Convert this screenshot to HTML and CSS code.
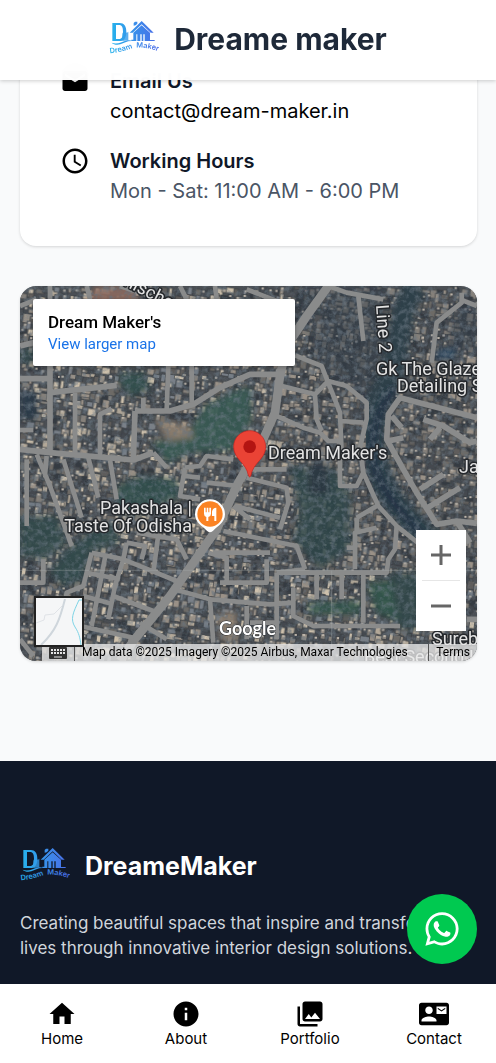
FILE: index.html
```html
<!DOCTYPE html>
<html lang="en">
<head>
    <meta charset="UTF-8">
    <meta name="viewport" content="width=device-width, initial-scale=1.0">
    <title>Dreame maker</title>
    <link rel="stylesheet" href="styles.css">
</head>
<body>

<!-- Shared logo -->
<svg class="sprite" aria-hidden="true">
    <defs>
        <linearGradient id="logoFill" gradientUnits="userSpaceOnUse" x1="30" y1="0" x2="170" y2="0">
            <stop offset="0" stop-color="#25b5ec"/>
            <stop offset="1" stop-color="#4a6fe8"/>
        </linearGradient>
    </defs>
    <symbol id="logo" viewBox="30 15 150 150">
        <g fill="url(#logoFill)">
            <path fill-rule="evenodd" d="M40 42h22c13 0 20 9 20 26 0 18-7 28-20 28H40zM51 48v42h9c9 0 12-8 12-22 0-13-3-20-12-20z"/>
            <path d="M70 96V74l7-14 6 12 5-4v26z" opacity=".8"/>
            <path d="M104 50V42l4-4h7v6l-5 5zM92 71l36-35 36 35h-9l-27-25-27 25z"/>
            <path d="M103 71l25-22 25 22v22h14v3h-30V76h-4v20h-5V76h-4v20h-9V76h-3v20H97v-4h6z"/>
            <path d="M38 101c16 6 30-2 42-6 8-2 14-2 20 1-16-1-24 6-36 10-10 3-20 1-26-5z"/>
        </g>
        <path id="logoArc" d="M33 133Q72 129 100 117Q138 112 178 127" fill="none"/>
        <text class="logo-text" fill="url(#logoFill)"><textPath href="#logoArc">Dream&#160; Maker</textPath></text>
    </symbol>
</svg>

<header class="header">
    <svg class="logo" role="img" aria-label="Dream Maker"><use href="#logo"/></svg>
    <h1 class="brand">Dreame maker</h1>
</header>

<main class="content">
    <section class="card">
        <div class="info-row">
            <svg class="icon" viewBox="0 0 24 24"><path d="M20 4H4c-1.100 0-2 .9-2 2v12c0 1.100.9 2 2 2h16c1.100 0 2-.9 2-2V6c0-1.100-.9-2-2-2zm0 4l-8 5-8-5V6l8 5 8-5v2z"/></svg>
            <div>
                <h2 class="info-title">Email Us</h2>
                <a class="info-link" href="mailto:contact@dream-maker.in">contact@dream-maker.in</a>
            </div>
        </div>
        <div class="info-row">
            <svg class="icon" viewBox="0 0 24 24"><path d="M12 2C6.500 2 2 6.500 2 12s4.500 10 10 10 10-4.500 10-10S17.500 2 12 2zm0 18c-4.400 0-8-3.600-8-8s3.600-8 8-8 8 3.600 8 8-3.600 8-8 8zM12.500 7H11v6l5.200 3.200.8-1.300-4.500-2.700z"/></svg>
            <div>
                <h2 class="info-title">Working Hours</h2>
                <p class="info-text">Mon - Sat: 11:00 AM - 6:00 PM</p>
            </div>
        </div>
    </section>

    <section class="map" aria-label="Map">
        <svg class="map-canvas" viewBox="0 0 457 375" preserveAspectRatio="xMidYMid slice">
            <defs>
                <filter id="soft" x="-10%" y="-10%" width="120%" height="120%"><feGaussianBlur stdDeviation="9"/></filter>
                <filter id="edge"><feGaussianBlur stdDeviation="1.200"/></filter>
                <filter id="grain" x="0" y="0" width="100%" height="100%">
                    <feTurbulence type="fractalNoise" baseFrequency=".06" numOctaves="4" seed="5"/>
                    <feColorMatrix values="0 0 0 0 .14  0 0 0 0 .18  0 0 0 0 .22  3 0 0 0 -1.300"/>
                </filter>
            </defs>
            <g transform="scale(.33333)">
                <rect width="1371" height="1125" fill="#4b4f54"/>
                <g id="blocks" filter="url(#edge)"></g>

                <!-- Tree cover, fields and ponds -->
                <g filter="url(#soft)" opacity=".92">
                    <path fill="#303d49" opacity=".6" d="M930 0h160l30 330-70 120-30-140-110-50-40-90zM1290 60h81v140l-90 10zM1060 470l130 240-100-60-70-90zM830 0h90l-60 150z"/>
                    <path fill="#375a53" d="M690 300l5 100-50 90-140 10-60 30-50-60 100-20 60-90 80-40z"/>
                    <path fill="#33504d" d="M290 600l70-30 110 10 10 55-130 50-60-10zM300 260l70 0 20 50-60 20-30-40z"/>
                    <path fill="#30494b" d="M130 800l90-70 60-20 20 60-90 30-20 80-60 20-40-40zM0 190h45v40H0zM0 690h110l30 80-60 50-80-10z"/>
                    <path fill="#2b3a48" d="M0 315h45l10 85H0z"/>
                    <path fill="#30494b" opacity=".85" d="M810 540l130 10 50 70v170l-90 60-80-90 20-80z"/>
                    <path fill="#2a3843" d="M865 535h60v90h-60z"/>
                    <path fill="#33554c" d="M1040 890l110-10 40 60v90l-120-50zM860 950l160-5v40H870z"/>
                    <path fill="#30474a" d="M1110 860h110l-30 170-50 0z"/>
                    <path fill="#8b6b5e" d="M225 0h110l30 60H190z"/>
                    <path fill="#8d7f70" d="M405 400l100 15 15 40-80 10zM590 985l60-10v90h-50z"/>
                    <path fill="#2f4a62" d="M1250 190l55-5v35h-60z"/>
                </g>

                <!-- Canal -->
                <path d="M1190 0C1120 90 1150 190 1105 280S1050 400 1065 500 1120 660 1240 770" fill="none" stroke="#2e414a" stroke-width="68" filter="url(#soft)"/>
                <path d="M1120 310C1070 380 1050 450 1060 520S1120 660 1210 750" fill="none" stroke="#213144" stroke-width="20" filter="url(#soft)"/>
                <rect width="1371" height="1125" filter="url(#grain)" opacity=".6"/>

                <!-- Streets -->
                <g class="roads" filter="url(#edge)">
                    <path class="road-main" d="M925 0L860 90L800 180L780 270L765 380L725 470L655 590L590 730L450 930L340 1065L300 1125"/>
                    <path class="road-wide" d="M0 490L90 500L340 522L400 500M0 278H90M90 240V500M90 320L290 298M345 375L340 522M345 375H450L520 355L600 305L690 265H775M0 180L60 165"/>
                    <path d="M165 320V500M240 510V385L275 368M445 240L440 370M515 240V350M370 335V372M400 500L440 545M0 432H40M20 520V720M50 505L90 600L155 780M80 510L75 570M130 520L185 695M205 515L235 635M270 522L290 640"/>
                    <path d="M200 0L210 40M300 0L420 40M585 0L590 40M680 10L770 45M90 0V40M480 0L500 40M0 60L50 40"/>
                    <path d="M825 208L905 240L960 380L965 500M785 300L885 325L925 285L980 300L1040 350V400L1020 485L1030 560L1075 660L1130 720L1200 775M885 325L890 400L905 435M770 390L850 425L900 440L925 465L965 465M965 405L1030 410"/>
                    <path d="M1325 20V50L1250 110L1235 230M925 0L980 20L1090 40M1015 30L1030 165M1371 60L1320 40"/>
                    <path class="road-wide" d="M1371 395L1140 335L1105 385L1100 460L1150 550L1190 620L1250 715L1310 705L1371 712M1105 465L1150 455M1115 390L1145 425M1210 400L1270 420L1350 470L1371 465M1230 460L1260 425M1215 670L1320 605M1200 610L1270 565M1310 705L1350 770"/>
                    <path d="M495 545L540 540L560 510L640 520M495 545L480 630L540 640M495 570L540 575M560 590L655 600M680 550H800M680 575L800 605L805 650L780 730M645 660L780 695M610 735L830 780L855 850M690 700L640 660"/>
                    <path d="M580 800H750M565 800L620 815V890M600 890H740V820M470 912L570 940L750 955L820 950M820 905V990L880 1020H1140M770 860H1100L1105 820L1125 790L1130 720M1030 860V1010M965 865V940M890 865V940M1005 850V740L1070 725M980 785H1005M1010 695V740M1010 695L1070 660M770 860V1060M570 940L580 1070M680 960V1060M770 1010H690"/>
                    <path d="M215 800L190 900L140 920L135 960M215 800L310 820L470 885M255 815L235 920L215 1020M310 820L285 900L265 1000M200 860L300 880M190 930L280 955M320 770L375 780L365 820M320 770L310 820M400 860L415 745M350 740L470 760L500 820M280 930L400 975M180 1020L340 1055M0 890H70V820M0 1060L40 1110M360 1010L440 1060M855 850L770 860M960 500V600H1010L1030 560"/>
                    <path class="road-wide" d="M1340 1000H1371"/>
                </g>
                <path d="M0 853H1371M935 853V1125" stroke="#aab0b0" opacity=".35" stroke-width="3"/>

                <!-- Markers -->
                <path fill="#fff" d="M570 640a45 45 0 0 1 45 45c0 26-24 36-34 48q-11 12-22 0c-10-12-34-22-34-48a45 45 0 0 1 45-45z"/>
                <circle cx="570" cy="684" r="38" fill="#fb8324"/>
                <path fill="#fff" d="M552 665h5v14h3v-14h5v14h3v-14h5v18q0 8-8 10v12h-6v-12q-7-2-7-10zM589 665v40h-6v-15h-7v-13q2-12 13-12z"/>
                <path fill="#ea4335" stroke="#c5221f" stroke-width="2" d="M689 434c-27 0-48 21-48 48 0 38 38 48 44 86q4 10 8 0c6-38 44-48 44-86 0-27-21-48-48-48z"/>
                <circle cx="689" cy="482" r="19" fill="#b31412"/>
            </g>
            <g class="map-labels">
                <text x="248" y="173">Dream Maker's</text>
                <text x="172" y="228" text-anchor="end">Pakashala |</text>
                <text x="172" y="246" text-anchor="end">Taste Of Odisha</text>
                <text x="356" y="89">Gk The Glaze</text>
                <text x="377" y="106">Detailing S</text>
                <text x="439" y="187">Jag</text>
                <text x="412" y="359">Sureb</text>
                <text x="344" y="377">Best Second H</text>
                <text transform="translate(356 19) rotate(86)">Line 2</text>
                <text transform="translate(103 -1) rotate(27)">nische</text>
                <text class="google" x="199" y="349">Google</text>
            </g>
        </svg>

        <div class="place-card">
            <strong class="place-name">Dream Maker's</strong>
            <a class="place-link" href="#">View larger map</a>
        </div>

        <div class="zoom">
            <button type="button" aria-label="Zoom in"><svg viewBox="0 0 20 20"><path d="M0 10h20M10 0v20"/></svg></button>
            <button type="button" aria-label="Zoom out"><svg viewBox="0 0 20 20"><path d="M0 10h20"/></svg></button>
        </div>

        <button class="layer-toggle" type="button" aria-label="Show street map">
            <svg viewBox="0 0 46 46">
                <path d="M0 24l8-3 1-5 9-1 8-8" fill="none" stroke="#e0e3e7" stroke-width="1"/>
                <path d="M29 0C24 20 20 32 5 46" fill="none" stroke="#cfd6dc" stroke-width="2"/>
                <path d="M46 1h-3c-6 13-9 19-4 27 4 6 5 11 6 18" fill="none" stroke="#7fd4e6" stroke-width="1"/>
            </svg>
        </button>

        <div class="attribution">
            <button class="keys" type="button" aria-label="Keyboard shortcuts">
                <svg viewBox="0 0 18 12">
                    <rect width="18" height="12" rx="1" fill="#333"/>
                    <path d="M2 3h14M2 6h14" stroke="#e4e4e4" stroke-width="2" stroke-dasharray="2 1"/>
                    <path d="M5 10h8" stroke="#e4e4e4" stroke-width="1"/>
                </svg>
            </button>
            <span class="credit">Map data ©2025 Imagery ©2025 Airbus, Maxar Technologies</span>
            <a class="terms" href="#">Terms</a>
        </div>
    </section>
</main>

<footer class="footer">
    <div class="footer-brand">
        <svg class="logo" role="img" aria-label="Dream Maker"><use href="#logo"/></svg>
        <span class="footer-name">DreameMaker</span>
    </div>
    <p class="footer-text">Creating beautiful spaces that inspire and transform lives through innovative interior design solutions.</p>
</footer>

<a class="whatsapp" href="#" aria-label="Chat on WhatsApp">
    <svg viewBox="0 0 24 24"><path d="M19.050 4.910A9.820 9.820 0 0 0 12.040 2c-5.460 0-9.910 4.450-9.910 9.910 0 1.750.46 3.450 1.320 4.950L2.050 22l5.250-1.380c1.450.79 3.080 1.210 4.740 1.210 5.460 0 9.910-4.450 9.910-9.910 0-2.650-1.030-5.140-2.900-7.010zm-7.010 15.240c-1.480 0-2.930-.4-4.200-1.150l-.3-.18-3.120.82.83-3.040-.2-.31a8.260 8.260 0 0 1-1.260-4.380c0-4.540 3.700-8.240 8.240-8.240 2.200 0 4.270.86 5.820 2.420a8.180 8.180 0 0 1 2.410 5.830c.02 4.540-3.680 8.230-8.220 8.230zm4.520-6.160c-.25-.12-1.470-.72-1.690-.81-.23-.08-.39-.12-.56.12-.17.25-.64.81-.78.97-.14.17-.29.19-.54.06-.25-.12-1.050-.39-1.990-1.230-.74-.66-1.230-1.470-1.380-1.720-.14-.25-.02-.38.11-.51.11-.11.25-.29.37-.43s.17-.25.25-.41c.08-.17.04-.31-.02-.43s-.56-1.340-.76-1.840c-.2-.48-.41-.42-.56-.43h-.48c-.17 0-.43.06-.66.31-.22.25-.86.85-.86 2.070 0 1.220.89 2.400 1.010 2.560.12.17 1.750 2.670 4.230 3.740.59.26 1.050.41 1.410.52.59.19 1.130.16 1.560.1.48-.07 1.470-.6 1.670-1.180.21-.58.21-1.070.14-1.180s-.22-.16-.47-.28z"/></svg>
</a>

<nav class="bottom-nav">
    <a href="#">
        <svg class="icon" viewBox="0 0 24 24"><path d="M10 20v-6h4v6h5v-8h3L12 3 2 12h3v8z"/></svg>
        <span>Home</span>
    </a>
    <a href="#">
        <svg class="icon" viewBox="0 0 24 24"><path d="M12 2C6.480 2 2 6.480 2 12s4.480 10 10 10 10-4.480 10-10S17.520 2 12 2zm1 15h-2v-6h2v6zm0-8h-2V7h2v2z"/></svg>
        <span>About</span>
    </a>
    <a href="#">
        <svg class="icon" viewBox="0 0 24 24"><path d="M22 16V4c0-1.100-.9-2-2-2H8c-1.100 0-2 .9-2 2v12c0 1.100.9 2 2 2h12c1.100 0 2-.9 2-2zm-11-4l2.030 2.710L16 11l4 5H8l3-4zM2 6v14c0 1.100.9 2 2 2h14v-2H4V6H2z"/></svg>
        <span>Portfolio</span>
    </a>
    <a href="#">
        <svg class="icon" viewBox="0 0 24 24"><path d="M21 8V7l-3 2-3-2v1l3 2 3-2zm1-5H2C.9 3 0 3.900 0 5v14c0 1.100.9 2 2 2h20c1.100 0 1.990-.9 1.990-2L24 5c0-1.100-.9-2-2-2zM8 6c1.660 0 3 1.340 3 3s-1.340 3-3 3-3-1.340-3-3 1.340-3 3-3zm6 12H2v-1c0-2 4-3.100 6-3.100s6 1.100 6 3.100v1zm8-6h-8V6h8v6z"/></svg>
        <span>Contact</span>
    </a>
</nav>

<script src="map.js"></script>
</body>
</html>
```

FILE: styles.css
```css
/* Basic styling for the body */
* {
    box-sizing: border-box;
}

body {
    display: flex;
    flex-direction: column;
    min-height: 100vh;
    margin: 0;
    background-color: #f9fafb;
    font-family: Inter, sans-serif;
    font-size: 20px;
    line-height: 30px;
    color: #000;
}

h1, h2, p {
    margin: 0;
}

a {
    color: inherit;
    text-decoration: none;
}

button {
    padding: 0;
    border: 0;
    cursor: pointer;
}

.sprite {
    position: absolute;
    width: 0;
    height: 0;
}

.icon {
    display: block;
    flex: none;
    width: 30px;
    height: 30px;
}

/* Header */
.header {
    position: fixed;
    top: 0;
    left: 0;
    right: 0;
    z-index: 10;
    display: flex;
    justify-content: center;
    align-items: center;
    gap: 15px;
    height: 80px;
    padding-bottom: 2px;
    background-color: rgba(255, 255, 255, 0.97);
    backdrop-filter: blur(12px);
    box-shadow: 0 1px 4px rgba(0, 0, 0, 0.2);
}

.logo {
    flex: none;
    width: 50px;
    height: 50px;
}

.logo-text {
    font-family: Inter, sans-serif;
    font-size: 22px;
    font-weight: 600;
}

.brand {
    font-size: 30px;
    line-height: 40px;
    font-weight: 700;
    color: #1e2939;
}

/* Contact card */
.content {
    display: flex;
    flex-direction: column;
    gap: 40px;
    padding: 26px 19px 100px 20px;
}

.card {
    display: flex;
    flex-direction: column;
    gap: 20px;
    padding: 40px;
    background-color: #fff;
    border-radius: 16px;
    box-shadow: 0 1px 3px rgba(0, 0, 0, 0.15);
}

.info-row {
    display: flex;
    gap: 20px;
}

.info-title {
    font-size: 20px;
    font-weight: 600;
    color: #101828;
}

.info-link {
    display: block;
}

.info-text {
    color: #4a5565;
}

/* Map */
.map {
    position: relative;
    height: 375px;
    overflow: hidden;
    border-radius: 16px;
    box-shadow: 0 1px 3px rgba(0, 0, 0, 0.15);
    font-family: Roboto, sans-serif;
}

.map-canvas {
    display: block;
    width: 100%;
    height: 100%;
}

.roads path {
    fill: none;
    stroke: #8a8b8b;
    stroke-width: 14;
    stroke-linejoin: round;
}

.roads .road-wide {
    stroke-width: 17;
}

.roads .road-main {
    stroke-width: 26;
}

.map-labels text {
    font-family: Roboto, sans-serif;
    font-size: 18px;
    fill: #e3e3e3;
    stroke: #25282c;
    stroke-width: 3px;
    stroke-linejoin: round;
    paint-order: stroke;
}

.map-labels .google {
    font-family: Lato, sans-serif;
    font-weight: 700;
    fill: #fff;
    stroke-width: 1px;
}

.place-card {
    position: absolute;
    top: 13px;
    left: 13px;
    display: flex;
    flex-direction: column;
    width: 262px;
    padding: 12px 15px 11px;
    background-color: #fff;
    border-radius: 2px;
    box-shadow: 0 1px 4px rgba(0, 0, 0, 0.3);
}

.place-name {
    font-size: 17px;
    line-height: 22px;
    font-weight: 500;
}

.place-link {
    font-size: 15px;
    line-height: 22px;
    color: #1a73e8;
}

.zoom {
    position: absolute;
    right: 11px;
    bottom: 30px;
    width: 50px;
    padding: 0 6px;
    background-color: #fff;
}

.zoom button {
    display: flex;
    justify-content: center;
    align-items: center;
    width: 100%;
    height: 50px;
    background: none;
}

.zoom button + button {
    height: 51px;
    border-top: 1px solid #e6e6e6;
}

.zoom svg {
    width: 20px;
    height: 20px;
    stroke: #666;
    stroke-width: 3;
}

.layer-toggle {
    position: absolute;
    left: 14px;
    bottom: 14px;
    z-index: 1;
    width: 50px;
    height: 51px;
    border: 2px solid #222;
    background-color: #f5f6f7;
}

.layer-toggle svg {
    display: block;
    width: 100%;
}

.attribution {
    position: absolute;
    left: 22px;
    right: 0;
    bottom: 0;
    display: flex;
    align-items: center;
    height: 17px;
    background-color: rgba(235, 235, 235, 0.78);
    font-size: 12px;
    line-height: 17px;
    white-space: nowrap;
}

.keys {
    display: flex;
    flex: none;
    justify-content: center;
    width: 32px;
    background: none;
}

.keys svg {
    width: 18px;
    height: 12px;
}

.credit, .terms {
    padding: 0 7px;
    border-left: 1px solid #555;
}

.credit {
    flex: 1;
}

/* Footer */
.footer {
    flex: 1;
    padding: 80px 20px 100px;
    background-color: #101828;
    color: #d1d5dc;
}

.footer-brand {
    display: flex;
    align-items: center;
    gap: 15px;
    margin-bottom: 20px;
}

.footer-name {
    font-size: 25px;
    font-weight: 700;
    color: #fff;
}

.footer-text {
    font-size: 17px;
    line-height: 25px;
}

/* WhatsApp button */
.whatsapp {
    position: fixed;
    right: 19px;
    bottom: 99px;
    z-index: 10;
    display: flex;
    justify-content: center;
    align-items: center;
    width: 70px;
    height: 70px;
    border-radius: 50%;
    background-color: #00c950;
}

.whatsapp svg {
    width: 40px;
    height: 40px;
    fill: #fff;
}

/* Bottom navigation */
.bottom-nav {
    position: fixed;
    left: 0;
    right: 0;
    bottom: 0;
    z-index: 9;
    display: grid;
    grid-template-columns: repeat(4, 1fr);
    padding: 15px 0 14px;
    background-color: #fff;
}

.bottom-nav a {
    display: flex;
    flex-direction: column;
    align-items: center;
    font-size: 15px;
    line-height: 20px;
}
```

FILE: map.js
```js
// Fill the map with small rooftops
const blocks = document.getElementById("blocks");
const roofs = ["#363b42", "#444950", "#5f5d5b", "#6d6a66", "#85807a", "#9a9187", "#b3a898", "#cdc0ac", "#7a8088", "#4d5359"];
let seed = 7;

function random() {
    seed = (seed * 16807) % 2147483647;
    return seed / 2147483647;
}

let markup = "";
for (let y = 0; y < 1125; y += 20) {
    for (let x = 0; x < 1371; x += 20) {
        const w = 8 + random() * 22;
        const h = 8 + random() * 22;
        // The east side has fewer bright roofs
        const range = x > 780 && y < 850 ? 6 : roofs.length;
        const color = roofs[Math.floor(random() * range)];
        const px = x + random() * 12;
        const py = y + random() * 12;
        markup += `<rect x="${px}" y="${py}" width="${w}" height="${h}" fill="${color}" stroke="#3a3e43" stroke-width="2" transform="rotate(8 ${px} ${py})"/>`;
        if (random() > 0.6) {
            markup += `<rect x="${px + 3}" y="${py + 2}" width="7" height="6" fill="#bdb5aa"/>`;
        }
    }
}
blocks.innerHTML = markup;
```
